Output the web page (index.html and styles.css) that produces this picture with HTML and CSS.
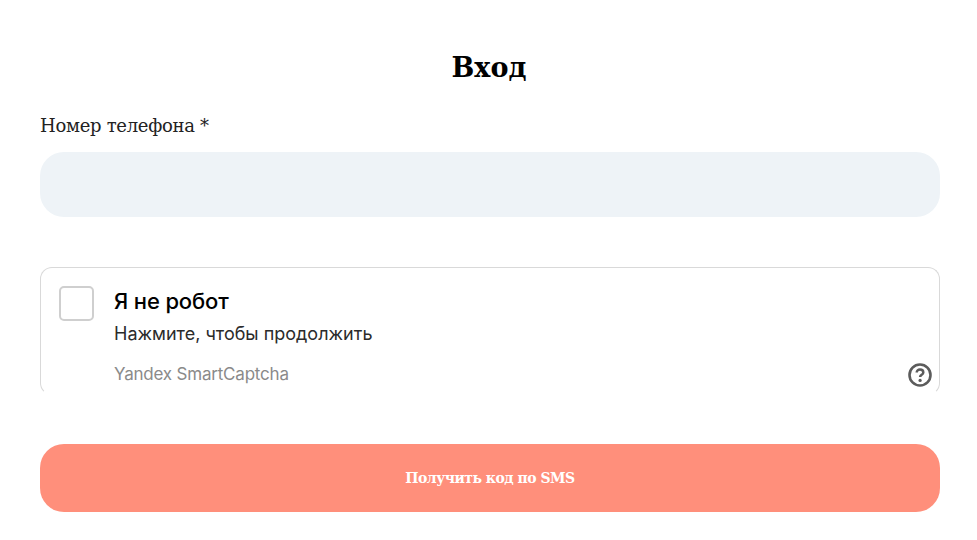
FILE: index.html
```html
<!DOCTYPE html>
<html lang="ru">

<head>
    <meta charset="UTF-8">
    <meta name="viewport" content="width=device-width, initial-scale=1.0">
    <title>Вход</title>
    <link rel="stylesheet" href="styles.css">
</head>

<body>
    <main class="login-form">
        <h1 class="login-title">Вход</h1>

        <label class="field-label" for="phone">Номер телефона *</label>
        <input class="field-input" id="phone" type="tel">

        <!-- Captcha widget -->
        <div class="captcha">
            <div class="captcha-box"></div>
            <div class="captcha-text">
                <div class="captcha-title">Я не робот</div>
                <div class="captcha-hint">Нажмите, чтобы продолжить</div>
                <div class="captcha-brand">Yandex SmartCaptcha</div>
            </div>
            <svg class="captcha-help" viewBox="0 0 24 24" width="24" height="24" fill="none">
                <circle cx="12" cy="12" r="10.5" stroke="#5c5c5c" stroke-width="2.6"/>
                <path d="M8.7 9.6c0-1.9 1.4-3.1 3.3-3.1s3.3 1.2 3.3 2.9c0 2.4-3.2 2.5-3.2 4.7" stroke="#5c5c5c" stroke-width="2.5"/>
                <circle cx="12.1" cy="17.4" r="1.6" fill="#5c5c5c"/>
            </svg>
        </div>

        <button class="submit-button" type="button">Получить код по SMS</button>
    </main>
</body>

</html>
```

FILE: styles.css
```css
body {
    margin: 0;
    background-color: #fff;
    color: #222;
    font-family: "DejaVu Serif", "Liberation Serif", serif;
}

.login-form {
    display: flex;
    flex-direction: column;
    width: 900px;
    margin-left: 40px;
    padding-top: 49px;
}

.login-title {
    margin: 0 0 26px;
    padding-right: 2px;
    font-size: 27px;
    line-height: 37px;
    font-weight: 700;
    color: #000;
    text-align: center;
}

.field-label {
    height: 40px;
    font-size: 18px;
    line-height: 28px;
    letter-spacing: -0.3px;
}

.field-input {
    height: 65px;
    padding: 0 24px;
    box-sizing: border-box;
    border: none;
    border-radius: 24px;
    background-color: #eef3f7;
}

/* Captcha */
.captcha {
    position: relative;
    display: flex;
    gap: 20px;
    box-sizing: border-box;
    height: 128px;
    margin-top: 50px;
    padding: 18px 18px 0;
    border: 1px solid #d9d9d9;
    border-bottom-color: #fff;
    border-radius: 12px;
    font-family: Inter, "Noto Sans", sans-serif;
}

.captcha-box {
    width: 31px;
    height: 31px;
    border: 2px solid #cfcfcf;
    border-radius: 5px;
}

.captcha-title {
    font-size: 22px;
    line-height: 30px;
    font-weight: 500;
    letter-spacing: -0.15px;
    color: #000;
}

.captcha-hint {
    margin-top: 4px;
    font-size: 18px;
    line-height: 28px;
    color: #2b2b2b;
}

.captcha-brand {
    margin-top: 13px;
    font-size: 17px;
    line-height: 26px;
    letter-spacing: -0.2px;
    color: #8a8a8a;
}

.captcha-help {
    position: absolute;
    right: 7px;
    bottom: 7px;
}

.submit-button {
    height: 68px;
    margin-top: 49px;
    border: none;
    border-radius: 24px;
    background-color: #ff8f7b;
    color: #fff;
    font-family: inherit;
    font-size: 14px;
    font-weight: 700;
    letter-spacing: -0.5px;
}
```
